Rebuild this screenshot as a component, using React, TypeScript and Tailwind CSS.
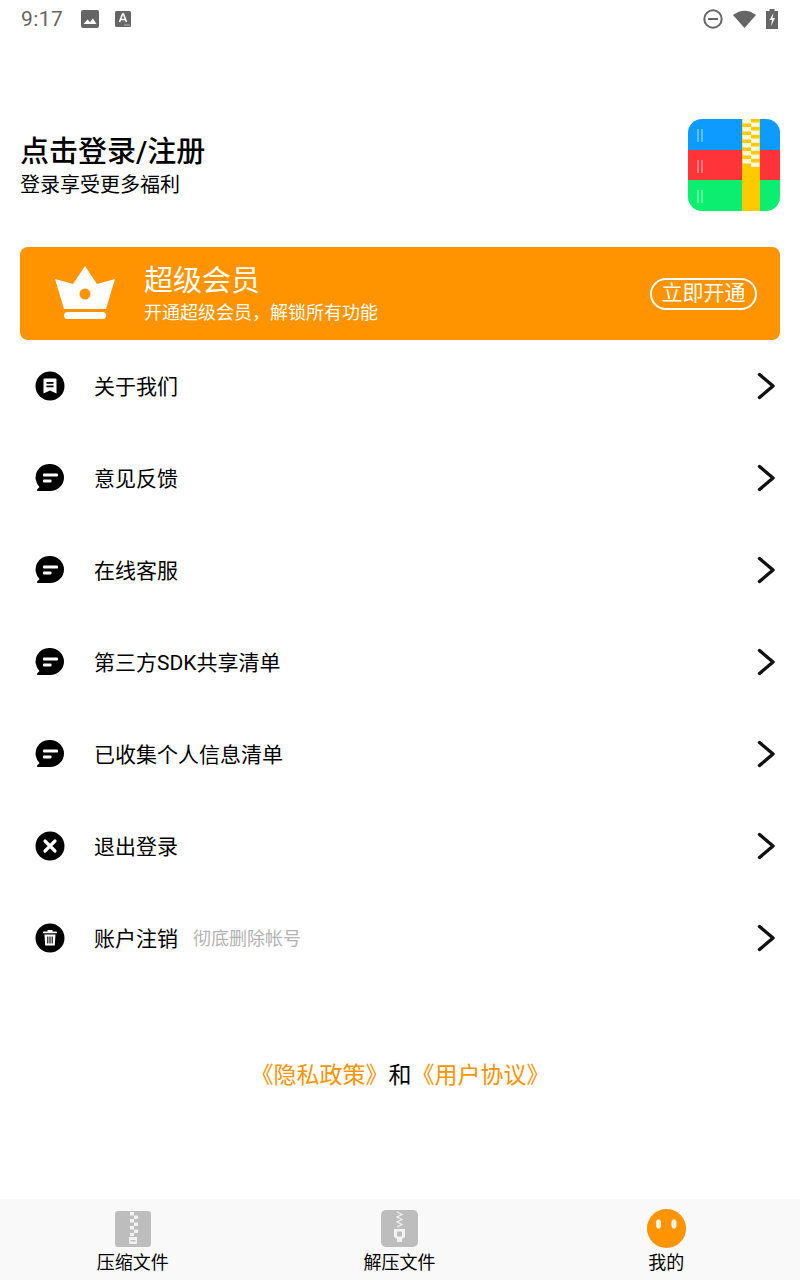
const cjk = "font-['Roboto','Noto_Sans_CJK_SC',sans-serif]";

function Chevron() {
  return (
    <svg width="20" height="30" viewBox="0 0 20 30" className="shrink-0">
      <path d="M3.5 3.5 L17 15 L3.5 26.5" fill="none" stroke="#111" strokeWidth="3.4" strokeLinecap="round" strokeLinejoin="round" />
    </svg>
  );
}

function ReceiptIcon() {
  return (
    <svg width="30" height="30" viewBox="0 0 30 30">
      <circle cx="15" cy="15" r="14.5" fill="#000" />
      <path d="M8.5 8.5 a1 1 0 0 1 1-1 h11 a1 1 0 0 1 1 1 V22.5 l-6.5-3 -6.5 3z" fill="#fff" />
      <rect x="11.5" y="11" width="7" height="1.8" fill="#000" />
      <rect x="11.5" y="14.5" width="7" height="1.8" fill="#000" />
    </svg>
  );
}

function ChatIcon() {
  return (
    <svg width="30" height="30" viewBox="0 0 30 30">
      <path d="M15 1 a14 13.5 0 0 1 0 27 H3 a1 1 0 0 1-.8-1.6 L4.5 24 A13.5 13.5 0 0 1 15 1z" fill="#000" />
      <rect x="8" y="10.5" width="15" height="3" rx="1" fill="#fff" />
      <rect x="8" y="16.5" width="8.5" height="3" rx="1" fill="#fff" />
    </svg>
  );
}

function CloseIcon() {
  return (
    <svg width="30" height="30" viewBox="0 0 30 30">
      <circle cx="15" cy="15" r="14.5" fill="#000" />
      <path d="M10 10 L20 20 M20 10 L10 20" stroke="#fff" strokeWidth="3.2" strokeLinecap="round" />
    </svg>
  );
}

function TrashIcon() {
  return (
    <svg width="30" height="30" viewBox="0 0 30 30">
      <circle cx="15" cy="15" r="14.5" fill="#000" />
      <rect x="8" y="8.5" width="14" height="1.8" rx="0.6" fill="#fff" />
      <rect x="12.5" y="7" width="5" height="2" fill="#fff" />
      <path d="M9.5 11.5 h11 l-0.7 11 h-9.6z" fill="#fff" />
      <path d="M12.8 13.5 v7 M15 13.5 v7 M17.2 13.5 v7" stroke="#000" strokeWidth="1.1" />
    </svg>
  );
}

function AppLogo() {
  return (
    <svg width="92" height="92" viewBox="0 0 92 92" className="shrink-0">
      <defs>
        <clipPath id="logoClip">
          <rect width="92" height="92" rx="14" />
        </clipPath>
      </defs>
      <g clipPath="url(#logoClip)">
        <rect width="92" height="31" fill="#0d9bff" />
        <rect y="31" width="92" height="30" fill="#ff3438" />
        <rect y="61" width="92" height="31" fill="#0cee70" />
        <rect x="54" width="18" height="92" fill="#ffca00" />
        {[0, 1, 2, 3, 4, 5].map((i) => (
          <g key={i}>
            <rect x="54.5" y={i * 8} width="8.5" height="4.5" fill="#fff7dc" />
            <rect x="63" y={3.5 + i * 8} width="8.5" height="4.5" fill="#fff7dc" />
          </g>
        ))}
        {[10, 41, 71].map((y) => (
          <g key={y} fill="#fff" fillOpacity="0.35">
            <rect x="9" y={y} width="2" height="13" />
            <rect x="13" y={y} width="2" height="13" />
          </g>
        ))}
      </g>
    </svg>
  );
}

function Crown() {
  return (
    <svg width="60" height="56" viewBox="0 0 60 56">
      <path d="M30 0 L42 18 L60 13 L51 43 H9 L0 13 L18 18z" fill="#fff" />
      <circle cx="30" cy="28" r="5.5" fill="#ff9300" />
      <rect x="9" y="46" width="42" height="7" rx="3.5" fill="#fff" />
    </svg>
  );
}

function ZipIcon() {
  return (
    <svg width="36" height="36" viewBox="0 0 36 36">
      <rect width="36" height="36" rx="3" fill="#bdbdbd" />
      {[1, 8, 15].map((y) => (
        <g key={y} fill="#f2f2f2">
          <rect x="15" y={y} width="4" height="3.5" />
          <rect x="19" y={y + 3.5} width="4" height="3.5" />
        </g>
      ))}
      <rect x="15" y="22" width="4" height="3" fill="#f2f2f2" />
      <path d="M14 26 h8 v6 a1 1 0 0 1-1 1 h-6 a1 1 0 0 1-1-1z" fill="#f2f2f2" />
      <rect x="15.5" y="29" width="5" height="1.5" fill="#bdbdbd" />
    </svg>
  );
}

function UnzipIcon() {
  return (
    <svg width="37" height="37" viewBox="0 0 37 37">
      <rect width="37" height="37" rx="5" fill="#bdbdbd" />
      <path d="M16 2 l5 2.5 -5 2.5 5 2.5 -5 2.5 5 2.5 -5 2.5" fill="none" stroke="#efefef" strokeWidth="1.3" />
      <path d="M13 19 h11 v8 l-3 2 v3 h-5 v-3 l-3-2z" fill="#f2f2f2" />
      <rect x="16" y="21.5" width="5" height="5" rx="1" fill="#bdbdbd" />
    </svg>
  );
}

function Face() {
  return (
    <svg width="39" height="39" viewBox="0 0 39 39">
      <circle cx="19.5" cy="19.5" r="19.5" fill="#ff9300" />
      <ellipse cx="11.5" cy="15" rx="2.6" ry="4.8" fill="#fff" fillOpacity="0.9" />
      <ellipse cx="27" cy="15" rx="2.6" ry="4.8" fill="#fff" fillOpacity="0.9" />
    </svg>
  );
}

const rows = [
  { label: "关于我们", icon: <ReceiptIcon /> },
  { label: "意见反馈", icon: <ChatIcon /> },
  { label: "在线客服", icon: <ChatIcon /> },
  { label: "第三方SDK共享清单", icon: <ChatIcon /> },
  { label: "已收集个人信息清单", icon: <ChatIcon /> },
  { label: "退出登录", icon: <CloseIcon /> },
  { label: "账户注销", icon: <TrashIcon />, note: "彻底删除帐号" },
];

const tabs = [
  { label: "压缩文件", icon: <ZipIcon /> },
  { label: "解压文件", icon: <UnzipIcon /> },
  { label: "我的", icon: <Face /> },
];

export default function App() {
  return (
    <div className={`flex h-[1280px] w-[800px] flex-col overflow-hidden bg-white ${cjk}`}>
      <div className="flex h-[37px] items-center justify-between pl-[21px] pr-[22px] text-[#666]">
        <div className="flex items-center">
          <span className="mt-[2px] text-[21px] leading-none tracking-[0.4px]">9:17</span>
          <svg width="18" height="18" viewBox="0 0 18 18" className="ml-[18px]">
            <rect width="18" height="18" rx="2" fill="#666" />
            <path d="M2.5 14 L6.5 9.5 L9 12 L12 8.5 L15.5 14z" fill="#fff" />
          </svg>
          <svg width="16" height="16" viewBox="0 0 16 16" className="ml-[16px]">
            <rect width="16" height="16" rx="1.5" fill="#666" />
            <path d="M4.5 11 L7.5 3 h1 L11.5 11 M5.8 8.5 h4.4" fill="none" stroke="#fff" strokeWidth="1.6" />
            <path d="M9.5 14 h1 M11.5 14 h1 M13.5 14 h1" stroke="#fff" strokeWidth="1.2" />
          </svg>
        </div>
        <div className="flex items-center">
          <svg width="20" height="20" viewBox="0 0 20 20">
            <circle cx="10" cy="10" r="8.7" fill="none" stroke="#666" strokeWidth="2" />
            <rect x="5" y="9" width="10" height="2" fill="#666" />
          </svg>
          <svg width="23" height="18" viewBox="0 0 23 18" className="ml-[10px]">
            <path d="M0 5 Q11.5 -3.5 23 5 L11.5 18z" fill="#666" />
          </svg>
          <svg width="12" height="20" viewBox="0 0 12 20" className="ml-[10px]">
            <path d="M3.5 0 h5 v2 H12 V20 H0 V2 h3.5z" fill="#666" />
            <path d="M7.5 4 L3.5 11 h2.5 L5 17 L9 9 H6.5z" fill="#fff" />
          </svg>
        </div>
      </div>

      <div className="mt-[82px] flex items-center justify-between px-[20px]">
        <div className="pt-[2px]">
          <div className="text-[29px] font-medium leading-[37px] text-black">点击登录/注册</div>
          <div className="text-[20px] leading-[28px] text-black">登录享受更多福利</div>
        </div>
        <AppLogo />
      </div>

      <div className="mx-[20px] mt-[36px] flex h-[93px] items-center rounded-[8px] bg-[#ff9300] pl-[35px] pr-[23px] text-white">
        <Crown />
        <div className="ml-[29px] flex-1">
          <div className="text-[29px] leading-[38px]">超级会员</div>
          <div className="mt-[1px] text-[18px] leading-[24px]">开通超级会员，解锁所有功能</div>
        </div>
        <div className="flex h-[32px] w-[107px] items-center justify-center rounded-full border-2 border-white text-[21px] leading-none">
          立即开通
        </div>
      </div>

      <div className="flex flex-col">
        {rows.map((row) => (
          <div key={row.label} className="flex h-[92px] items-center pl-[35px] pr-[24px]">
            <div className="flex h-[30px] w-[30px] items-center justify-center">{row.icon}</div>
            <span className="ml-[29px] mt-[2px] text-[21px] leading-none text-black">{row.label}</span>
            {row.note && <span className="ml-[15px] mt-[2px] text-[18px] leading-none text-[#b3b3b3]">{row.note}</span>}
            <div className="ml-auto">
              <Chevron />
            </div>
          </div>
        ))}
      </div>

      <div className="mt-[77px] text-center text-[23px] leading-[30px] text-black">
        <span className="text-[#ff9300]">《隐私政策》</span>和<span className="text-[#ff9300]">《用户协议》</span>
      </div>

      <div className="mt-auto grid h-[81px] grid-cols-3 bg-[#f9f9f9]">
        {tabs.map((tab) => (
          <div key={tab.label} className="flex flex-col items-center pt-[10px]">
            <div className="flex h-[39px] items-center">{tab.icon}</div>
            <span className="mt-[3px] mr-[1px] text-[18px] leading-[24px] text-black">{tab.label}</span>
          </div>
        ))}
      </div>
    </div>
  );
}
